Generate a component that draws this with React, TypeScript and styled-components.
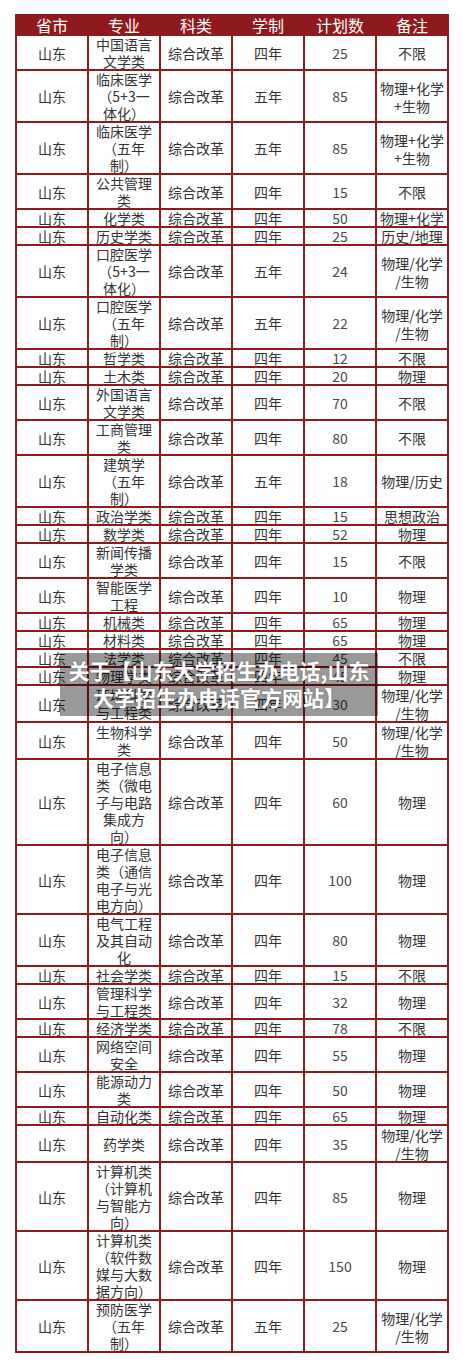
import React from 'react'
import styled, { createGlobalStyle } from 'styled-components'

const GlobalStyle = createGlobalStyle`
  body {
    margin: 0;
    background: #fff;
    font-family: "Noto Sans CJK SC", "Noto Sans", sans-serif;
  }
`

const Page = styled.div`
  position: relative;
  width: 463px;
  min-height: 1370px;
  padding: 14px 0 0 15px;
  box-sizing: border-box;
`

const Table = styled.div`
  display: grid;
  grid-template-columns: repeat(6, 70px);
  gap: 2px;
  padding: 2px;
  width: max-content;
  background: #8e1a1e;
`

const HeadCell = styled.div`
  height: 18px;
  line-height: 18px;
  text-align: center;
  font-size: 16px;
  color: #fff;
  background: #8e1a1e;
`

const Cell = styled.div<{ $num?: boolean }>`
  display: flex;
  align-items: center;
  justify-content: center;
  text-align: center;
  background: #fff;
  font-size: 14px;
  color: ${({ $num }) => ($num ? '#4a4a4a' : '#333')};
`

const Lines = styled.div<{ $tall?: boolean }>`
  line-height: ${({ $tall }) => ($tall ? 18 : 17)}px;
  margin-bottom: -1px;
  white-space: nowrap;
`

const Banner = styled.div`
  position: absolute;
  left: 60px;
  top: 653px;
  width: 318px;
  padding: 4px 0 5px;
  background: rgba(0, 0, 0, 0.4);
  color: #fff;
  font-size: 21px;
  font-weight: bold;
  line-height: 27px;
  text-align: center;
  white-space: nowrap;
  text-shadow: 0 0 2px rgba(0, 0, 0, 0.3);
`

type Row = [string[], string, string, string[]]

const headers = ['省市', '专业', '科类', '学制', '计划数', '备注']

const rows: Row[] = [
  [['中国语言', '文学类'], '四年', '25', ['不限']],
  [['临床医学', '（5+3一', '体化）'], '五年', '85', ['物理+化学', '+生物']],
  [['临床医学', '（五年', '制）'], '五年', '85', ['物理+化学', '+生物']],
  [['公共管理', '类'], '四年', '15', ['不限']],
  [['化学类'], '四年', '50', ['物理+化学']],
  [['历史学类'], '四年', '25', ['历史/地理']],
  [['口腔医学', '（5+3一', '体化）'], '五年', '24', ['物理/化学', '/生物']],
  [['口腔医学', '（五年', '制）'], '五年', '22', ['物理/化学', '/生物']],
  [['哲学类'], '四年', '12', ['不限']],
  [['土木类'], '四年', '20', ['物理']],
  [['外国语言', '文学类'], '四年', '70', ['不限']],
  [['工商管理', '类'], '四年', '80', ['不限']],
  [['建筑学', '（五年', '制）'], '五年', '18', ['物理/历史']],
  [['政治学类'], '四年', '15', ['思想政治']],
  [['数学类'], '四年', '52', ['物理']],
  [['新闻传播', '学类'], '四年', '15', ['不限']],
  [['智能医学', '工程'], '四年', '10', ['物理']],
  [['机械类'], '四年', '65', ['物理']],
  [['材料类'], '四年', '65', ['物理']],
  [['法学类'], '四年', '45', ['不限']],
  [['物理学类'], '四年', '45', ['物理']],
  [['环境科学', '与工程类'], '四年', '30', ['物理/化学', '/生物']],
  [['生物科学', '类'], '四年', '50', ['物理/化学', '/生物']],
  [['电子信息', '类（微电', '子与电路', '集成方', '向）'], '四年', '60', ['物理']],
  [['电子信息', '类（通信', '电子与光', '电方向）'], '四年', '100', ['物理']],
  [['电气工程', '及其自动', '化'], '四年', '80', ['物理']],
  [['社会学类'], '四年', '15', ['不限']],
  [['管理科学', '与工程类'], '四年', '32', ['物理']],
  [['经济学类'], '四年', '78', ['不限']],
  [['网络空间', '安全'], '四年', '55', ['物理']],
  [['能源动力', '类'], '四年', '50', ['物理']],
  [['自动化类'], '四年', '65', ['物理']],
  [['药学类'], '四年', '35', ['物理/化学', '/生物']],
  [['计算机类', '（计算机', '与智能方', '向）'], '四年', '85', ['物理']],
  [['计算机类', '（软件数', '媒与大数', '据方向）'], '四年', '150', ['物理']],
  [['预防医学', '（五年', '制）'], '五年', '25', ['物理/化学', '/生物']],
]

const renderLines = (lines: string[]) =>
  lines.map((line, i) => (
    <React.Fragment key={i}>
      {i > 0 && <br />}
      {line}
    </React.Fragment>
  ))

const App = () => {
  return (
    <Page>
      <GlobalStyle />
      <Table>
        {headers.map(h => (
          <HeadCell key={h}>{h}</HeadCell>
        ))}
        {rows.map(([major, years, count, note], i) => (
          <React.Fragment key={i}>
            <Cell>
              <Lines>山东</Lines>
            </Cell>
            <Cell>
              <Lines>{renderLines(major)}</Lines>
            </Cell>
            <Cell>
              <Lines>综合改革</Lines>
            </Cell>
            <Cell>
              <Lines>{years}</Lines>
            </Cell>
            <Cell $num>
              <Lines>{count}</Lines>
            </Cell>
            <Cell>
              <Lines $tall={note.length > 1}>{renderLines(note)}</Lines>
            </Cell>
          </React.Fragment>
        ))}
      </Table>
      <Banner>
        关于【山东大学招生办电话,山东
        <br />
        大学招生办电话官方网站】
      </Banner>
    </Page>
  )
}

export default App
